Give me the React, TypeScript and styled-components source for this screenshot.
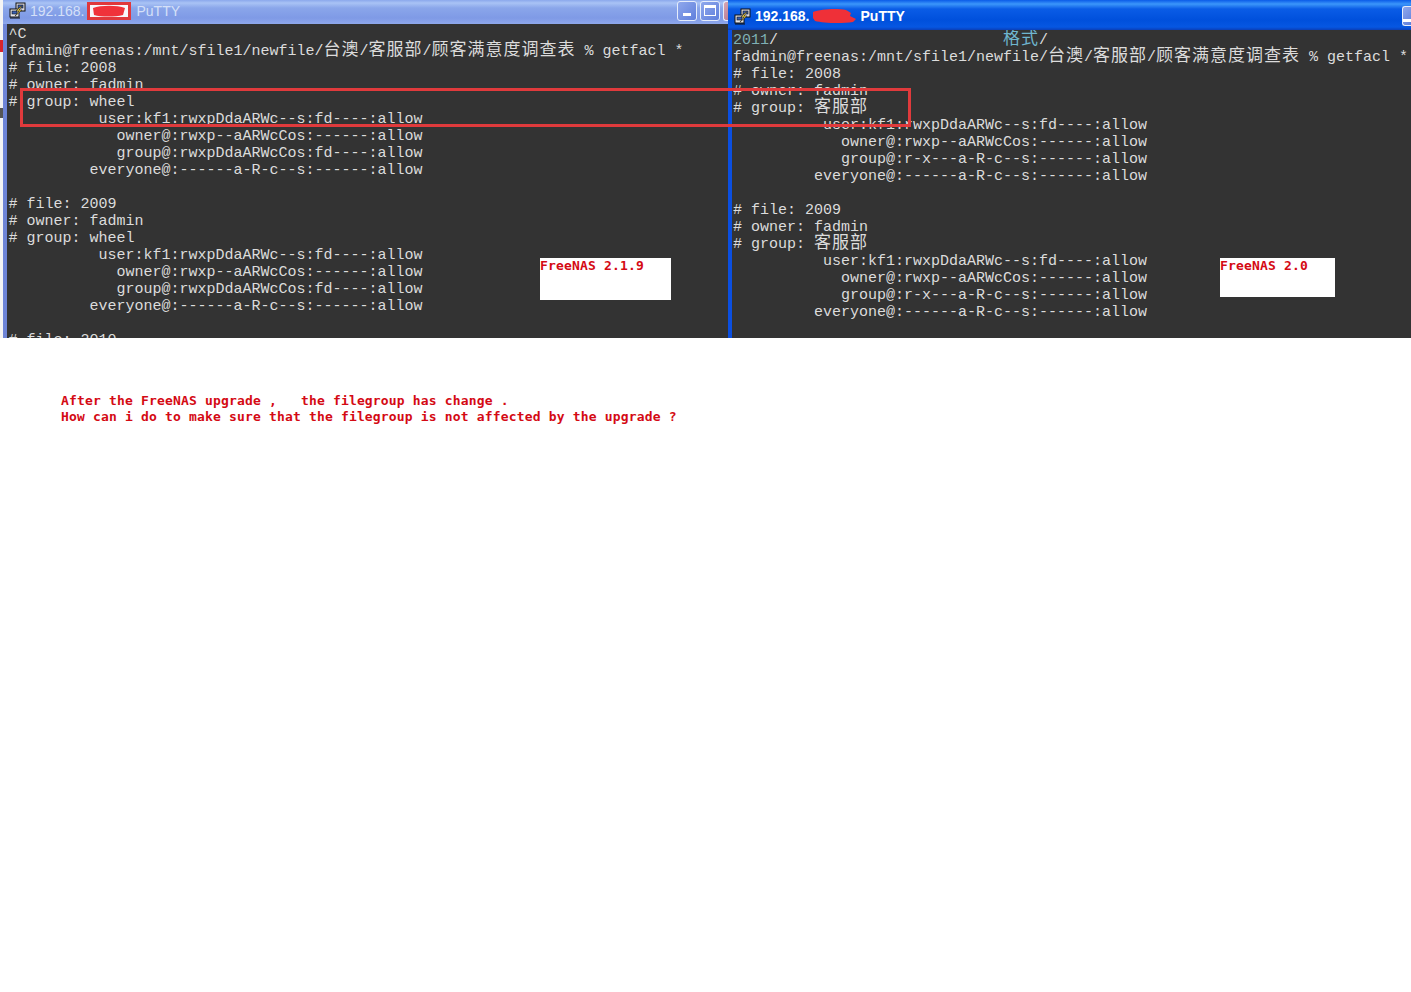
import styled, { createGlobalStyle } from 'styled-components';

const GlobalStyle = createGlobalStyle`
  html, body {
    margin: 0;
    padding: 0;
    background: #fff;
  }
`;

const Page = styled.div`
  position: relative;
  width: 1411px;
  height: 992px;
  overflow: hidden;
  background: #fff;
`;

const Desktop = styled.div`
  display: flex;
  height: 338px;
  overflow: hidden;
`;

const DesktopEdge = styled.div`
  width: 3px;
  flex: none;
  background: linear-gradient(#f4f4f4 0 40px, #d8242c 40px 52px, #f1f1f1 52px 108px, #555 108px 118px, #f4f4f4 118px);
`;

const Window = styled.section<{ $active?: boolean }>`
  display: flex;
  flex-direction: column;
  min-width: 0;
  flex: ${(p) => (p.$active ? '1' : 'none')};
  width: ${(p) => (p.$active ? 'auto' : '725px')};
  background: ${(p) => (p.$active ? '#0b4fe0' : '#6d84d6')};
`;

const TitleBar = styled.header<{ $active?: boolean }>`
  display: flex;
  align-items: center;
  flex: none;
  height: ${(p) => (p.$active ? '30px' : '24px')};
  padding: ${(p) => (p.$active ? '2px 0 0 6px' : '0 0 3px 6px')};
  box-sizing: border-box;
  background: ${(p) =>
    p.$active
      ? 'linear-gradient(#0a5be8 0, #3b96fa 4px, #0a5ce6 9px, #0050dc 20px, #0657e2 27px, #0a3fb8 30px)'
      : 'linear-gradient(#8ba8ec 0, #a9c3f5 3px, #8aa6ea 8px, #7f9ae6 18px, #8ea8ec 24px)'};
  color: ${(p) => (p.$active ? '#fff' : '#d5e0f8')};
  font: ${(p) => (p.$active ? 700 : 400)} 14px "Liberation Sans", Arial, sans-serif;
`;

const TitleIcon = styled.svg`
  width: 17px;
  height: 17px;
  flex: none;
  margin-right: 4px;
`;

const TitleText = styled.span<{ $gap: number }>`
  display: inline-flex;
  gap: ${(p) => p.$gap}px;
  white-space: pre;
  align-items: center;
`;

const Scribble = styled.svg`
  display: block;
  flex: none;
`;

const Controls = styled.div`
  display: flex;
  align-items: center;
  gap: 3px;
  margin-left: auto;
`;

const WinButton = styled.div<{ $tone?: 'close' | 'blue'; $clip?: number }>`
  width: ${(p) => p.$clip ?? 20}px;
  height: 20px;
  box-sizing: border-box;
  border: 1px solid #e5edfb;
  border-right: ${(p) => (p.$clip ? 'none' : '1px solid #e5edfb')};
  border-radius: ${(p) => (p.$clip ? '3px 0 0 3px' : '3px')};
  display: flex;
  align-items: center;
  justify-content: center;
  background: ${(p) =>
    p.$tone === 'close'
      ? 'linear-gradient(135deg, #d8a6b4, #bb7f98)'
      : 'linear-gradient(135deg, #8fa8ec, #5f7fdc)'};
`;

const MinGlyph = styled.span`
  width: 8px;
  height: 3px;
  background: #fff;
  margin-top: 8px;
`;

const MaxGlyph = styled.span`
  width: 12px;
  height: 11px;
  box-sizing: border-box;
  border: 1px solid #fff;
  border-top-width: 3px;
`;

const Terminal = styled.pre<{ $active?: boolean }>`
  flex: 1;
  position: relative;
  margin: 0 0 0 4px;
  padding: 2px 0 0 ${(p) => (p.$active ? '1px' : '1.5px')};
  overflow: hidden;
  background: #333;
  color: #dcdcdc;
  font: 15px/17px "Liberation Mono", "Courier New", monospace;
`;

const Line = styled.div`
  height: 17px;
  white-space: pre;
`;

const Cjk = styled.span<{ $tint?: boolean }>`
  font-family: "Noto Sans CJK SC", sans-serif;
  font-size: 17px;
  line-height: 0;
  letter-spacing: 1px;
  color: ${(p) => (p.$tint ? '#6fb6cf' : 'inherit')};
`;

const Dim = styled.span`
  color: #7fb0b4;
`;

const VersionNote = styled.div<{ $w: number; $h: number; $x: number; $y: number }>`
  position: absolute;
  top: ${(p) => p.$y}px;
  left: ${(p) => p.$x}px;
  width: ${(p) => p.$w}px;
  height: ${(p) => p.$h}px;
  background: #fff;
`;

const RedText = styled.span`
  color: #d40a14;
  font: 700 13px/16px "DejaVu Sans Mono", monospace;
  letter-spacing: 0.17px;
  white-space: pre;
`;

const Question = styled.div`
  display: flex;
  flex-direction: column;
  padding: 55px 0 0 61px;
`;

const Highlight = styled.div`
  position: absolute;
  left: 20px;
  top: 88px;
  width: 891px;
  height: 39px;
  box-sizing: border-box;
  border: 3px solid #e03a3c;
  pointer-events: none;
`;

const HostBox = styled.div`
  position: absolute;
  left: 87px;
  top: 2px;
  width: 44px;
  height: 18px;
  box-sizing: border-box;
  border: 3px solid #e0383c;
  background: #f7f7fb;
  display: flex;
  align-items: center;
  justify-content: center;
`;

const PuttyIcon = () => (
  <TitleIcon viewBox="0 0 17 17">
    <rect x="7" y="1" width="9" height="8" fill="#d8d8e0" stroke="#111" />
    <rect x="9" y="3" width="5" height="3" fill="#3a5fb0" stroke="#111" strokeWidth="0.6" />
    <rect x="1" y="7" width="9" height="8" fill="#e4e4ea" stroke="#111" />
    <rect x="3" y="9" width="5" height="3" fill="#3a5fb0" stroke="#111" strokeWidth="0.6" />
    <path d="M1 16h10" stroke="#111" />
    <path d="M12 4 7 9l3 0-4 5 7-6-3 0 3-4z" fill="#f5d33a" stroke="#222" strokeWidth="0.6" />
  </TitleIcon>
);

const renderText = (text: string) =>
  text.split(/([\u4e00-\u9fff]+)/).map((part, i) =>
    /[\u4e00-\u9fff]/.test(part) ? <Cjk key={i}>{part}</Cjk> : part,
  );

const promptLine = 'fadmin@freenas:/mnt/sfile1/newfile/台澳/客服部/顾客满意度调查表 % getfacl *';

const aclBlock = (file: string, group: string, groupAcl: string) => [
  `# file: ${file}`,
  '# owner: fadmin',
  `# group: ${group}`,
  '          user:kf1:rwxpDdaARWc--s:fd----:allow',
  '            owner@:rwxp--aARWcCos:------:allow',
  `            group@:${groupAcl}:allow`,
  '         everyone@:------a-R-c--s:------:allow',
  '',
];

const oldLines = [
  '^C',
  promptLine,
  ...aclBlock('2008', 'wheel', 'rwxpDdaARWcCos:fd----'),
  ...aclBlock('2009', 'wheel', 'rwxpDdaARWcCos:fd----'),
  '# file: 2010',
];

const newLines = [
  promptLine,
  ...aclBlock('2008', '客服部', 'r-x---a-R-c--s:------'),
  ...aclBlock('2009', '客服部', 'r-x---a-R-c--s:------'),
];

export default function App() {
  return (
    <Page>
      <GlobalStyle />
      <Desktop>
        <DesktopEdge />
        <Window>
          <TitleBar>
            <PuttyIcon />
            <TitleText $gap={52}>
              <span>192.168.</span>
              <span>PuTTY</span>
            </TitleText>
            <Controls>
              <WinButton $tone="blue"><MinGlyph /></WinButton>
              <WinButton $tone="blue"><MaxGlyph /></WinButton>
              <WinButton $tone="close" $clip={5} />
            </Controls>
          </TitleBar>
          <Terminal>
            {oldLines.map((l, i) => (
              <Line key={i}>{renderText(l)}</Line>
            ))}
            <VersionNote $x={533} $y={234} $w={131} $h={42}>
              <RedText>FreeNAS 2.1.9</RedText>
            </VersionNote>
          </Terminal>
        </Window>
        <Window $active>
          <TitleBar $active>
            <PuttyIcon />
            <TitleText $gap={0}>
              <span>192.168.</span>
              <Scribble width="51" height="18" viewBox="0 0 51 18">
                <path d="M3 5c8-3 24-4 33-2l5 3-1 3 6 3-3 3c-12 2-30 1-38-1L3 11z" fill="#ef3038" />
              </Scribble>
              <span>PuTTY</span>
            </TitleText>
            <Controls>
              <WinButton $tone="blue" $clip={9}><MinGlyph /></WinButton>
            </Controls>
          </TitleBar>
          <Terminal $active>
            <Line>
              <Dim>2011</Dim>/{' '.repeat(25)}<Cjk $tint>格式</Cjk>/
            </Line>
            {newLines.map((l, i) => (
              <Line key={i}>{renderText(l)}</Line>
            ))}
            <VersionNote $x={488} $y={228} $w={115} $h={39}>
              <RedText>FreeNAS 2.0</RedText>
            </VersionNote>
          </Terminal>
        </Window>
      </Desktop>
      <Question>
        <RedText>After the FreeNAS upgrade ,   the filegroup has change .</RedText>
        <RedText>How can i do to make sure that the filegroup is not affected by the upgrade ?</RedText>
      </Question>
      <HostBox>
        <Scribble width="36" height="12" viewBox="0 0 36 12">
          <path d="M2 3c8-3 24-3 32 0l-2 7c-8 2-22 2-29 0z" fill="#f0323a" />
        </Scribble>
      </HostBox>
      <Highlight />
    </Page>
  );
}
